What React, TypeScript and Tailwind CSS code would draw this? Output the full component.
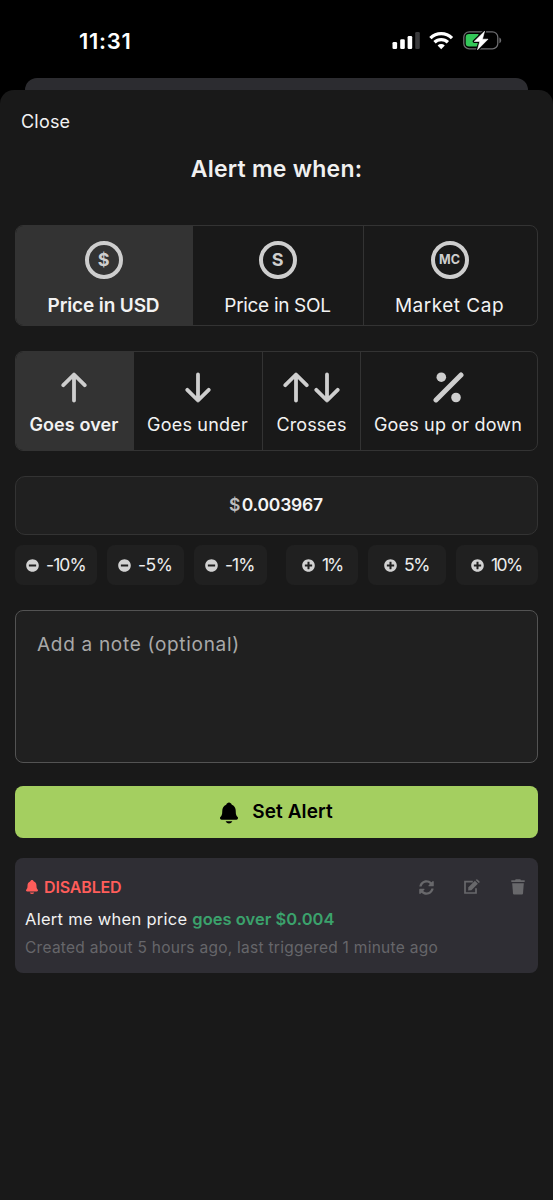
import type { ReactNode } from "react";
import { FaMinusCircle, FaPlusCircle, FaSyncAlt } from "react-icons/fa";
import { IoNotifications } from "react-icons/io5";

function StatusBar() {
  return (
    <header className="flex h-[78px] items-start justify-between pl-[79px] pr-[50px] pt-[27px]">
      <span className="text-[22px] font-semibold leading-7 tracking-[0.7px] text-white">11:31</span>
      <div className="flex pt-1">
        <svg width="111" height="20" viewBox="0 0 111 20" fill="#fff">
          <rect x="0.5" y="11" width="4.6" height="7" rx="1.3" />
          <rect x="8.2" y="8.3" width="4.6" height="9.7" rx="1.3" />
          <rect x="15.6" y="5" width="4.6" height="13" rx="1.3" />
          <rect x="23.2" y="1" width="4.6" height="17" rx="1.3" fill="#39393b" />
          <g fill="none" stroke="#fff" strokeWidth="3.3">
            <path d="M38.4 7.1A15.3 15.3 0 0 1 60 7.1" />
            <path d="M42.5 11.3A9.6 9.6 0 0 1 55.9 11.3" />
          </g>
          <path d="M49.2 18.2L45.6 14.5A5.2 5.2 0 0 1 52.8 14.5Z" />
          <rect x="71.8" y="0.8" width="34" height="17" rx="5.4" fill="none" stroke="#6d6d70" strokeWidth="1.3" />
          <path d="M107.4 6.5C109.8 7.5 109.8 11.3 107.4 12.3Z" fill="#6d6d70" />
          <path d="M77 3.1H86.5V15.6H77A3.3 3.3 0 0 1 73.7 12.3V6.4A3.3 3.3 0 0 1 77 3.1Z" fill="#34c759" />
          <path d="M92.6 0.2L82.2 10.4H87.8L85.5 18.8L96 8.2H90.4Z" stroke="#000" strokeWidth="3" strokeLinejoin="round" />
          <path d="M92.6 0.2L82.2 10.4H87.8L85.5 18.8L96 8.2H90.4Z" stroke="#fff" strokeWidth="0.6" strokeLinejoin="round" />
        </svg>
      </div>
    </header>
  );
}

function Coin({ children }: { children: ReactNode }) {
  return (
    <div className="flex size-[38px] items-center justify-center rounded-full border-4 border-[#cecece] font-bold leading-none text-[#cecece]">
      {children}
    </div>
  );
}

function UpArrow() {
  return (
    <svg width="26" height="31" viewBox="0 0 26 31" fill="none" stroke="#cecece" strokeWidth="3.8" strokeLinecap="round" strokeLinejoin="round">
      <path d="M13 28.6V2.8M2.3 13.2L13 2.5L23.7 13.2" />
    </svg>
  );
}

function DownArrow() {
  return (
    <svg width="26" height="31" viewBox="0 0 26 31" fill="none" stroke="#cecece" strokeWidth="3.8" strokeLinecap="round" strokeLinejoin="round">
      <path d="M13 2.4V28.2M2.3 17.8L13 28.5L23.7 17.8" />
    </svg>
  );
}

function Percent() {
  return (
    <svg width="31" height="31" viewBox="0 0 31 31" fill="#cecece">
      <path d="M3 27.9L28 2.9" stroke="#cecece" strokeWidth="5" strokeLinecap="round" />
      <circle cx="8.3" cy="5.2" r="4.8" />
      <circle cx="23" cy="25.5" r="4.8" />
    </svg>
  );
}

function EditIcon() {
  return (
    <svg width="18" height="16" viewBox="0 0 18 16" fill="#68686b">
      <path d="M9.8 2.6H2V14H13V9.2" fill="none" stroke="#68686b" strokeWidth="1.7" />
      <path d="M5.4 8.2L11.9 1.7L14.9 4.7L8.4 11.2L5.1 11.5Z" />
      <path d="M12.7 1L13.3 0.4Q13.8 0 14.4 0.5L16.5 2.6Q17 3.1 16.5 3.6L15.7 4Z" />
    </svg>
  );
}

function TrashIcon() {
  return (
    <svg width="14" height="16" viewBox="0 0 14 16" fill="#68686b">
      <path d="M0.3 1.3H4L4.7 0.3H9.3L10 1.3H13.7V3.1H0.3Z" />
      <path d="M1.2 4.2H12.8L12 14.5Q11.9 15.5 10.9 15.5H3.1Q2.1 15.5 2 14.5Z" />
    </svg>
  );
}

function Option({ className, icon, children }: { className: string; icon: ReactNode; children: ReactNode }) {
  return (
    <button className={`flex flex-col items-center whitespace-nowrap text-[#f2f2f2] ${className}`}>
      {icon}
      {children}
    </button>
  );
}

function Chip({ className, minus, label, text }: { className: string; minus?: boolean; label: string; text: string }) {
  return (
    <button className={`flex h-10 items-center rounded-lg bg-[#202020] text-[17.5px] text-[#ededed] ${className}`}>
      {minus ? <FaMinusCircle className="size-[13px] text-[#d2d2d2]" /> : <FaPlusCircle className="size-[13px] text-[#d2d2d2]" />}
      <span className={`ml-[7px] ${text}`}>{label}</span>
    </button>
  );
}

export default function App() {
  return (
    <div className="flex h-[1200px] w-[553px] flex-col overflow-hidden bg-black font-['Inter',sans-serif]">
      <StatusBar />
      <div className="mx-[25px] h-3 shrink-0 rounded-t-[12px] bg-[#2c2c30]" />
      <main className="flex grow flex-col rounded-t-[14px] bg-[#191919] px-[15px]">
        <button className="ml-[6px] mt-5 h-6 self-start text-[18px] leading-6 tracking-[0.2px] text-[#f2f2f2]">Close</button>
        <h1 className="mt-[19px] h-8 text-center text-[23px] font-semibold leading-8 tracking-[0.24px] text-[#f0f0f0]">Alert me when:</h1>

        <section className="mt-10 flex h-[101px] overflow-hidden rounded-lg border border-[#333333] text-[19px] leading-6">
          <Option className="w-[177px] bg-[#333333] pr-[2px] pt-[15px] font-semibold tracking-[-0.13px]" icon={<Coin><span className="text-[18px]">$</span></Coin>}>
            <span className="mt-[15px]">Price in USD</span>
          </Option>
          <Option className="w-[171px] border-r border-[#333333] pr-px pt-[15px] tracking-[-0.32px]" icon={<Coin><span className="text-[18px]">S</span></Coin>}>
            <span className="mt-[15px]">Price in SOL</span>
          </Option>
          <Option className="grow pr-[2px] pt-[15px] tracking-[0.5px]" icon={<Coin><span className="text-[12.5px] tracking-normal">MC</span></Coin>}>
            <span className="mt-[15px]">Market Cap</span>
          </Option>
        </section>

        <section className="mt-[25px] flex h-[100px] overflow-hidden rounded-lg border border-[#333333] text-[18px] leading-6">
          <Option className="w-[118px] bg-[#333333] pr-[2px] pt-5 font-semibold tracking-[0.1px]" icon={<UpArrow />}>
            <span className="mt-[10px]">Goes over</span>
          </Option>
          <Option className="w-[129px] border-r border-[#333333] pr-px pt-5 tracking-[0.2px]" icon={<DownArrow />}>
            <span className="mt-[10px]">Goes under</span>
          </Option>
          <Option className="w-[98px] border-r border-[#333333] pt-5 tracking-[0.1px]" icon={<div className="flex gap-[5px]"><UpArrow /><DownArrow /></div>}>
            <span className="mt-[10px]">Crosses</span>
          </Option>
          <Option className="grow pr-[2px] pt-5 tracking-[0.18px]" icon={<Percent />}>
            <span className="mt-[10px]">Goes up or down</span>
          </Option>
        </section>

        <div className="mt-[25px] flex h-[59px] items-center justify-center rounded-[10px] border border-[#333333] bg-[#202020] pr-px text-[17.5px] font-semibold tracking-[-0.2px] text-[#f4f4f4]">
          <span className="mr-[1.5px] text-[#bdbdbd]">$</span>0.003967
        </div>

        <div className="mt-[10px] flex justify-between">
          <div className="flex gap-[10px]">
            <Chip minus className="w-[82px] pl-[11px]" label="-10%" text="tracking-[-0.9px]" />
            <Chip minus className="w-[77px] pl-[11px]" label="-5%" text="tracking-[-0.5px]" />
            <Chip minus className="w-[73px] pl-[11px]" label="-1%" text="tracking-[-1px]" />
          </div>
          <div className="flex gap-[10px]">
            <Chip className="w-[72px] pl-4" label="1%" text="tracking-[-2.2px]" />
            <Chip className="w-[78px] pl-4" label="5%" text="tracking-[-1.3px]" />
            <Chip className="w-[82px] pl-[15px]" label="10%" text="tracking-[-1.6px]" />
          </div>
        </div>

        <textarea
          className="mt-[25px] h-[153px] shrink-0 resize-none rounded-lg border border-[#535353] bg-[#202020] pl-[21px] pt-5 text-[19px] leading-7 tracking-[0.7px] text-white outline-none placeholder:text-[#a9a9a9]"
          placeholder="Add a note (optional)"
        />

        <button className="mt-[23px] flex h-[52px] shrink-0 items-center justify-center rounded-lg bg-[#a4cf60] pr-[3px] pt-px text-[19px] font-semibold tracking-[0.1px] text-black">
          <IoNotifications className="mr-[11px] size-6" />
          Set Alert
        </button>

        <article className="mt-5 flex h-[115px] shrink-0 flex-col rounded-lg bg-[#2f2e34] pl-[10px] pr-[13px] pt-[17px]">
          <div className="flex h-6 items-center">
            <IoNotifications className="-ml-[1px] mr-1 size-4 text-[#ff5d5a]" />
            <span className="text-[16px] font-semibold tracking-[-0.15px] text-[#ff5d5a]">DISABLED</span>
            <div className="ml-auto flex items-center text-[#68686b]">
              <FaSyncAlt className="size-[15px]" />
              <span className="ml-[29px]"><EditIcon /></span>
              <span className="ml-[30px]"><TrashIcon /></span>
            </div>
          </div>
          <p className="mt-2 text-[16.5px] leading-6 tracking-[0.28px] text-[#f2f2f2]">
            Alert me when price <strong className="font-semibold tracking-[0.03px] text-[#3ba26c]">goes over $0.004</strong>
          </p>
          <p className="mt-[5px] whitespace-nowrap text-[15.5px] leading-6 tracking-[0.27px] text-[#66666a]">
            Created about 5 hours ago, last triggered 1 minute ago
          </p>
        </article>
      </main>
    </div>
  );
}
